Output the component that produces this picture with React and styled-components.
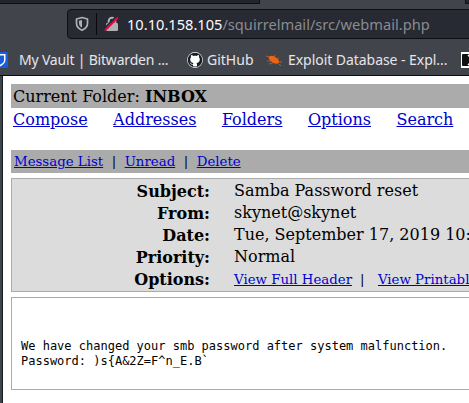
import React from "react";
import styled, { createGlobalStyle } from "styled-components";

const Global = createGlobalStyle`
  *{box-sizing:border-box}
  html,body{margin:0;background:#fff;overflow:hidden}
`;
const Window = styled.div`
  width:469px;height:403px;overflow:hidden;display:flex;flex-direction:column;
  font-family:"DejaVu Serif",serif;font-size:16px;color:#000;
`;
const Chrome = styled.header`
  height:76px;flex:none;background:#42444c;border-bottom:1px solid #0c0c0f;
  font-family:"Noto Sans",sans-serif;display:flex;flex-direction:column;
`;
const TabStrip = styled.div`height:9px;flex:none;display:flex;justify-content:space-between;`;
const Tab = styled.div`width:${p => p.$w}px;height:4px;background:#23252e;border-bottom:1px solid #0f1015;border-${p => p.$side}:1px solid #0f1015;`;
const UrlBar = styled.div`
  height:30px;flex:none;margin-left:67px;width:420px;border:1px solid #0e0f14;border-radius:4px 0 0 4px;
  background:#272933;display:flex;align-items:center;padding-left:7px;
`;
const Divider = styled.i`width:1px;height:22px;background:#08090c;margin:0 7px 0 7px;`;
const Url = styled.span`
  margin-left:7px;font-size:14.64px;line-height:28px;color:#8b8c90;white-space:nowrap;
  b{font-weight:400;color:#fbfbfe}
`;
const Bookmarks = styled.nav`height:36px;padding-top:5px;flex:none;display:flex;align-items:center;overflow:hidden;`;
const Bookmark = styled.span`
  width:${p => p.$w}px;flex:none;color:#e6e6e8;font-size:14px;line-height:30px;white-space:nowrap;
  letter-spacing:${p => p.$spacing || 0}px;
`;
const Icon = styled.svg`flex:none;display:block;width:${p => p.$w}px;height:${p => p.$h || p.$w}px;margin-right:${p => p.$gap || 0}px;`;

const Page = styled.main`flex:1;display:flex;background:#fff;`;
const Splitter = styled.div`width:3px;flex:none;background:#3c464b;border-right:1px solid #151c20;`;
const Mail = styled.section`width:458px;flex:none;margin-left:8px;padding-top:8px;`;
const FolderBar = styled.div`height:24px;background:#ababab;padding-left:2px;line-height:25px;white-space:nowrap;`;
const Link = styled.a`color:#0000cc;text-decoration:underline;white-space:nowrap;`;
const Menu = styled.nav`height:42px;padding-left:2px;display:flex;gap:25.500px;line-height:23px;`;
const Actions = styled.div`
  height:23px;background:#ababab;padding-left:3px;font-size:13.333px;line-height:23px;display:flex;gap:8.500px;white-space:nowrap;
`;
const Headers = styled.div`
  height:114px;width:470px;margin-top:5px;border:1px solid #ababab;background:#dcdcdc;padding-top:1px;
`;
const Row = styled.div`height:22px;display:grid;grid-template-columns:198px 1fr;column-gap:24px;line-height:22px;white-space:nowrap;`;
const Label = styled.strong`text-align:right;padding-top:1px;`;
const Value = styled.span``;
const Options = styled.span`font-size:13.333px;display:flex;gap:8px;line-height:24px;`;
const Separator = styled.span`margin-right:5.400px;`;
const Body = styled.pre`
  height:93px;width:470px;margin:5px 0 0;border:1px solid #ababab;padding:41px 0 0 9px;
  font:12px/15px "DejaVu Sans Mono",monospace;
`;

export default function App() {
  return (
    <Window>
      <Global />
      <Chrome>
        <TabStrip><Tab $w={260} $side="right" /><Tab $w={4} $side="left" /></TabStrip>
        <UrlBar>
          <Icon $w={14} $h={16} viewBox="0 0 14 16" fill="none">
            <path d="M7 1.500 12.500 3v4.500c0 3-2 5.200-5.500 6.700C3.500 12.700 1.500 10.500 1.500 7.500V3Z" stroke="#b1b1b5" strokeWidth="1.700" strokeLinejoin="round" />
            <path d="M7 4v7.500C5 10.500 4 9 4 7V4.700Z" fill="#b1b1b5" />
          </Icon>
          <Divider />
          <Icon $w={16} viewBox="0 0 16 16" fill="none">
            <path d="M4.700 8V5a3.300 3.300 0 0 1 6.600 0v3" stroke="#b1b1b5" strokeWidth="2" />
            <rect x="2" y="7" width="12" height="8" rx="1.200" fill="#b1b1b5" />
            <path d="M0 13 12.500.5" stroke="#272933" strokeWidth="2" />
            <path d="M1 14.500 14 1.500" stroke="#e80a44" strokeWidth="2" />
          </Icon>
          <Url><b>10.10.158.105</b>/squirrelmail/src/webmail.php</Url>
        </UrlBar>
        <Bookmarks>
          <Icon $w={8} $h={16} $gap={11} viewBox="8 0 8 16">
            <rect width="16" height="16" rx="1.500" fill="#175ddc" />
            <path d="M3 2h10.500v6c0 3-2.500 5-5.500 6.500C5 13 3 11 3 8Z" fill="#fff" />
            <path d="M8 3.500h4V8c0 2-1.500 3.500-4 4.700Z" fill="#175ddc" />
          </Icon>
          <Bookmark $w={168} $spacing={-0.19}>My Vault | Bitwarden ...</Bookmark>
          <Icon $w={16} $gap={4} viewBox="0 0 16 16">
            <circle cx="8" cy="8" r="7.900" fill="#fff" />
            <path fill="#1b1f23" fillRule="evenodd" d="M8 .7a7.300 7.300 0 1 0 0 14.600A7.300 7.300 0 0 0 8 .7ZM6 14.200v-1.600c-1.600.4-2.200-.3-2.600-1-.2-.5-.5-.7-.9-1 1.200-.2 1.500 1.200 2.200 1.400.5.200 1 .1 1.400-.1.100-.4.300-.7.500-.9C4.700 10.700 3.200 9.700 3.200 7.500c0-.9.300-1.600.8-2.200-.2-.8-.1-1.600.2-2.300.8 0 1.500.4 2.200.9 1-.2 2.200-.2 3.200 0 .7-.5 1.400-.9 2.200-.9.300.7.400 1.500.2 2.300.5.600.8 1.300.8 2.200 0 2.200-1.500 3.200-3.400 3.500.4.400.6.900.6 1.500v1.700c-1.300.4-2.700.4-4 0Z" />
          </Icon>
          <Bookmark $w={59}>GitHub</Bookmark>
          <Icon $w={16} $gap={6} viewBox="0 0 16 16">
            <path d="M3 4.500c2-1.500 5-.5 7.500 1.500s3.500 4 2 5.300c-2 .9-4.500 0-6.500-1.300S2 6.500 3 4.500Z" fill="#ef6412" />
            <path d="m3 5-3-1m5 5H1m6 2-4 1m5-7 1-2m2 4 2-1m-1 4h4m-3 2 2 2" stroke="#d6601c" strokeWidth=".8" />
          </Icon>
          <Bookmark $w={173} $spacing={-0.05}>Exploit Database - Expl...</Bookmark>
          <Icon $w={16} viewBox="0 0 16 16">
            <rect width="16" height="16" fill="#fff" /><rect x="1" y="2" width="14" height="12" rx="1" fill="#111" />
            <path d="m7 3 5 5-5 5" fill="none" stroke="#fff" strokeWidth="1.500" />
          </Icon>
        </Bookmarks>
      </Chrome>
      <Page>
        <Splitter />
        <Mail>
          <FolderBar>Current Folder: <b>INBOX</b></FolderBar>
          <Menu>
            {["Compose", "Addresses", "Folders", "Options", "Search"].map(t => <Link key={t}>{t}</Link>)}
          </Menu>
          <Actions>
            <Link>Message List</Link><span>|</span><Link>Unread</Link><span>|</span><Link>Delete</Link>
          </Actions>
          <Headers>
            <Row><Label>Subject:</Label><Value>Samba Password reset</Value></Row>
            <Row><Label>From:</Label><Value>skynet@skynet</Value></Row>
            <Row><Label>Date:</Label><Value>Tue, September 17, 2019 10:</Value></Row>
            <Row><Label>Priority:</Label><Value>Normal</Value></Row>
            <Row><Label>Options:</Label><Options><Link>View Full Header</Link><Separator>|</Separator><Link>View Printable</Link></Options></Row>
          </Headers>
          <Body>{"We have changed your smb password after system malfunction.\nPassword: )s{A&2Z=F^n_E.B`"}</Body>
        </Mail>
      </Page>
    </Window>
  );
}
